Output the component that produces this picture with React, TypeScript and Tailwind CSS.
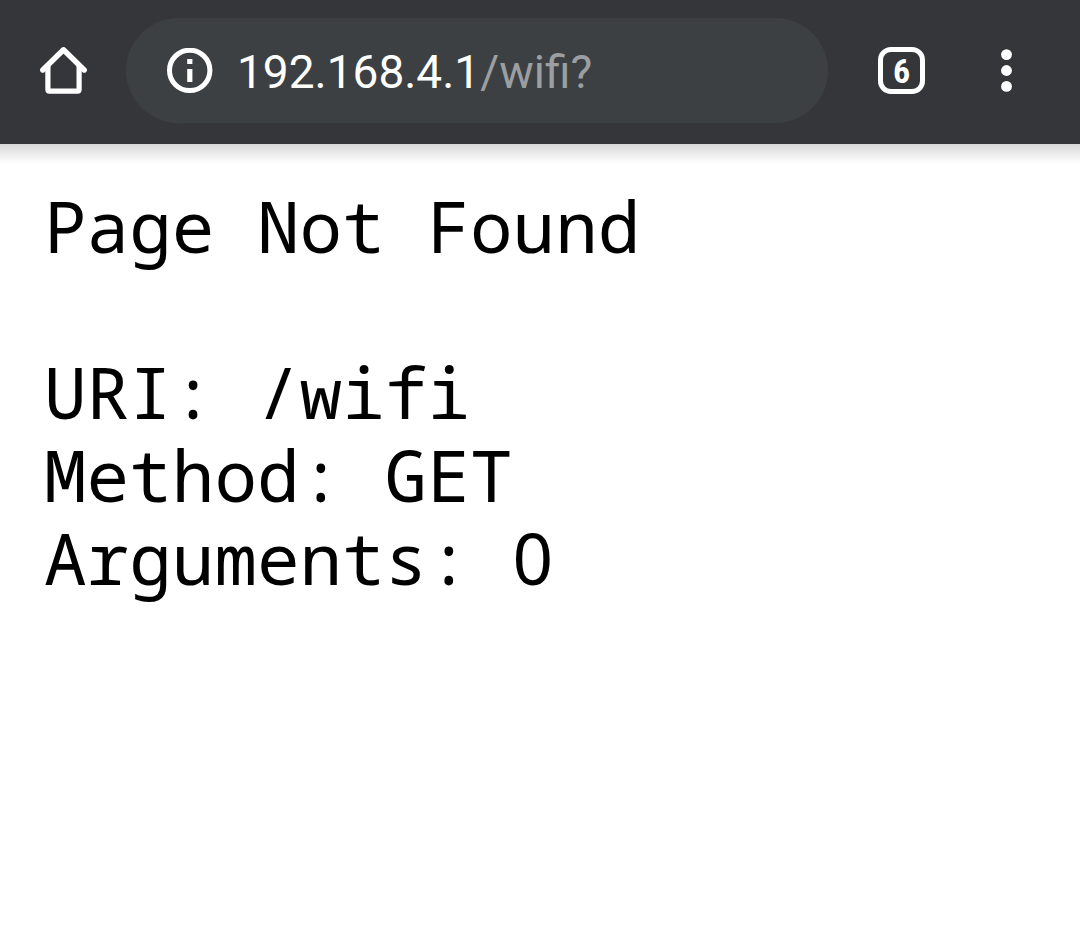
import React from "react";

interface ToolbarProps {
  host: string;
  path: string;
  tabCount: number;
}

const HomeIcon: React.FC = () => (
  <svg width="47" height="47" viewBox="0 0 47 47" fill="none" stroke="white" aria-hidden="true">
    <path d="M2.8 23 23.5 2.8 44.2 23" strokeWidth="5.4" strokeLinecap="round" strokeLinejoin="round" />
    <path d="M7.9 19v23.6q0 1.6 1.6 1.6h28q1.6 0 1.6-1.6V19" strokeWidth="5.2" />
  </svg>
);

const InfoIcon: React.FC = () => (
  <svg width="46" height="46" viewBox="0 0 46 46" aria-hidden="true">
    <circle cx="22.7" cy="22.4" r="20.2" fill="none" stroke="white" strokeWidth="5" />
    <path d="M20.2 11h5.2v5h-5.2zM20.2 21h5.2v13h-5.2z" fill="white" />
  </svg>
);

const MenuIcon: React.FC = () => (
  <svg width="11" height="43" viewBox="0 0 11 43" fill="white" aria-hidden="true">
    <circle cx="5.5" cy="5.6" r="5.4" />
    <circle cx="5.5" cy="21.5" r="5.4" />
    <circle cx="5.5" cy="37.4" r="5.4" />
  </svg>
);

const Toolbar: React.FC<ToolbarProps> = ({ host, path, tabCount }) => {
  return (
    <header className="flex items-center bg-[#35363a] pt-[18px] pr-[42px] pb-[21px] font-['Roboto',sans-serif]">
      <button type="button" aria-label="Home" className="flex w-[126px] shrink-0 justify-center">
        <HomeIcon />
      </button>
      <div className="flex h-[105px] min-w-0 flex-1 items-center rounded-full bg-[#3c4043] pr-10 pl-[41px]">
        <button type="button" aria-label="Site information" className="mr-6 shrink-0">
          <InfoIcon />
        </button>
        <div className="flex min-w-0 flex-1 items-center pt-0.5 text-[46px] leading-[56px]">
          <label htmlFor="path" className="text-white">
            {host}
          </label>
          <input
            id="path"
            type="text"
            defaultValue={path}
            className="min-w-0 flex-1 bg-transparent text-[#9c9fa1] outline-none"
          />
        </div>
      </div>
      <button type="button" aria-label="Tabs" className="flex w-[147px] shrink-0 justify-center">
        <span className="flex size-[47px] items-center justify-center rounded-[13px] border-5 border-white font-['Roboto_Condensed','Open_Sans_Condensed','Liberation_Sans_Narrow','Roboto',sans-serif] text-[34px] leading-8 font-bold text-white">
          {tabCount}
        </span>
      </button>
      <button type="button" aria-label="Menu" className="flex w-[63px] shrink-0 justify-center">
        <MenuIcon />
      </button>
    </header>
  );
};

export default function App() {
  return (
    <div className="min-h-screen bg-white">
      <Toolbar host="192.168.4.1" path="/wifi?" tabCount={6} />
      <div className="h-5 bg-linear-to-b from-black/15 to-transparent" />
      <main className="px-11 pt-5 font-['Noto_Sans_Mono','DejaVu_Sans_Mono',monospace] text-[71px] leading-[83px] text-black">
        <pre className="font-[inherit]">{"Page Not Found\n\nURI: /wifi\nMethod: GET"}</pre>
        <div className="flex whitespace-pre">
          <span>{"Arguments: "}</span>
          {/* plain zero, the mono face has a slashed one */}
          <span className="font-['Noto_Sans',sans-serif]">0</span>
        </div>
      </main>
    </div>
  );
}
